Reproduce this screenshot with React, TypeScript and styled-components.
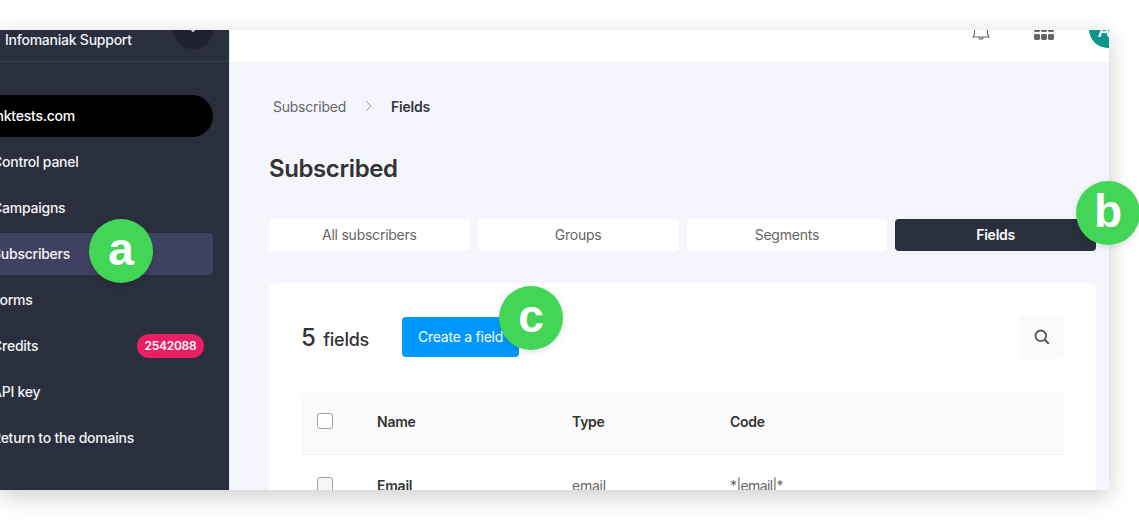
import React from 'react';
import styled, { createGlobalStyle } from 'styled-components';

const GlobalStyle = createGlobalStyle`
  html, body {
    margin: 0;
    padding: 0;
    background: #ffffff;
    font-family: Inter, "Liberation Sans", sans-serif;
    -webkit-font-smoothing: antialiased;
  }
`;

const menuItems = [
  { label: 'Control panel' },
  { label: 'Campaigns' },
  { label: 'Subscribers', active: true },
  { label: 'Forms' },
  { label: 'Credits', badge: '2542088' },
  { label: 'API key' },
  { label: 'Return to the domains' },
];

const tabs = ['All subscribers', 'Groups', 'Segments', 'Fields'];

const App = () => (
  <Page>
    <GlobalStyle />
    <Frame>
      <Sidebar>
        <SideHead>
          <OrgName>Infomaniak Support</OrgName>
          <OrgToggle>
            <svg width="12" height="12" viewBox="0 0 12 12" fill="none" stroke="#e6e7ec" strokeWidth="1.2">
              <path d="M2.5 4 6 7.5 9.5 4" />
            </svg>
          </OrgToggle>
        </SideHead>
        <SideList>
          <DomainPill>linktests.com</DomainPill>
          {menuItems.map((item) => (
            <MenuItem key={item.label} $active={item.active}>
              <span>{item.label}</span>
              {item.badge && <CountBadge>{item.badge}</CountBadge>}
            </MenuItem>
          ))}
        </SideList>
      </Sidebar>
      <Main>
        <TopBar>
          <TopIcon $left={742} $top={-12}>
            <svg width="18" height="24" viewBox="0 0 18 24" fill="none" stroke="#666" strokeWidth="1.1">
              <path d="M2.5 2v14L1 19h16l-1.5-3V2M7 19c0 2.8 4 2.8 4 0" />
            </svg>
          </TopIcon>
          <TopIcon $left={44} $top={-4}>
            <svg width="20" height="14" viewBox="0 0 20 14" fill="#666">
              <rect x="0" y="0" width="6" height="6" rx="1.4" />
              <rect x="7" y="0" width="6" height="6" rx="1.4" />
              <rect x="14" y="0" width="6" height="6" rx="1.4" />
              <rect x="0" y="8" width="6" height="6" rx="1.4" />
              <rect x="7" y="8" width="6" height="6" rx="1.4" />
              <rect x="14" y="8" width="6" height="6" rx="1.4" />
            </svg>
          </TopIcon>
          <Avatar>A</Avatar>
        </TopBar>
        <Content>
          <Breadcrumb>
            <span>Subscribed</span>
            <svg width="8" height="12" viewBox="0 0 8 12" fill="none" stroke="#999" strokeWidth="1">
              <path d="M1.5 1.5 6 6l-4.5 4.5" />
            </svg>
            <strong>Fields</strong>
          </Breadcrumb>
          <Title>Subscribed</Title>
          <Tabs>
            {tabs.map((tab) => (
              <Tab key={tab} $active={tab === 'Fields'}>
                {tab}
              </Tab>
            ))}
          </Tabs>
          <Card>
            <CardHead>
              <Count>
                <b>5</b> fields
              </Count>
              <CreateButton>Create a field</CreateButton>
              <SearchButton>
                <svg width="16" height="16" viewBox="0 0 16 16" fill="none" stroke="#555" strokeWidth="1.8">
                  <circle cx="6.8" cy="6.8" r="5.3" />
                  <path d="m10.8 10.8 4 4" strokeWidth="2.2" />
                </svg>
              </SearchButton>
            </CardHead>
            <TableHead>
              <CheckCell>
                <Check />
              </CheckCell>
              <NameCell>Name</NameCell>
              <TypeCell>Type</TypeCell>
              <CodeCell>Code</CodeCell>
            </TableHead>
            <TableRow>
              <CheckCell>
                <Check $filled />
              </CheckCell>
              <NameCell>Email</NameCell>
              <TypeCell $plain>email</TypeCell>
              <CodeCell $plain>*|email|*</CodeCell>
            </TableRow>
          </Card>
        </Content>
      </Main>
      <Marker $x={121} $y={251}>a</Marker>
      <Marker $x={1108} $y={213}>b</Marker>
      <Marker $x={531} $y={318}>c</Marker>
    </Frame>
  </Page>
);

const Page = styled.div`
  width: 1139px;
  height: 520px;
  padding-top: 30px;
  box-sizing: border-box;
  overflow: hidden;
  background: #ffffff;
`;

const Frame = styled.div`
  position: relative;
  display: flex;
  width: 1109px;
  height: 460px;
  letter-spacing: -0.015em;
  box-shadow: 0 6px 22px rgba(0, 0, 0, 0.2);
`;

const Sidebar = styled.aside`
  width: 230px;
  flex: none;
  overflow: hidden;
  background: #2a2f3e;
  color: #f2f3f6;
  font-size: 14px;
  font-weight: 450;
  border-right: 1px solid #e4e6f0;
  box-sizing: border-box;
`;

const SideHead = styled.div`
  display: flex;
  justify-content: space-between;
  align-items: flex-end;
  height: 66px;
  margin-top: -34px;
  padding: 0 16px 12px 5px;
  box-sizing: border-box;
  border-bottom: 1px solid #3a3f55;
  width: 229px;
`;

const OrgName = styled.div`
  line-height: 18px;
`;

const OrgToggle = styled.div`
  display: flex;
  align-items: flex-start;
  justify-content: center;
  width: 40px;
  height: 40px;
  border-radius: 50%;
  background: #1f222e;
  padding-top: 15px;
  box-sizing: border-box;
`;

const SideList = styled.nav`
  display: flex;
  flex-direction: column;
  gap: 4px;
  width: 253px;
  margin-left: -40px;
  padding-top: 33px;
`;

const DomainPill = styled.div`
  display: flex;
  align-items: center;
  height: 42px;
  padding: 0 0 2px 29px;
  box-sizing: border-box;
  border-radius: 0 21px 21px 0;
  background: #000000;
  color: #ffffff;
`;

const MenuItem = styled.div<{ $active?: boolean }>`
  display: flex;
  align-items: center;
  justify-content: space-between;
  height: 42px;
  padding: 0 9px 2px 32px;
  box-sizing: border-box;
  border-radius: 4px;
  background: ${(props) => (props.$active ? '#3e4160' : 'transparent')};
`;

const CountBadge = styled.span`
  padding: 0 7.5px;
  height: 24px;
  margin-bottom: -2px;
  line-height: 24px;
  border-radius: 12px;
  background: #e91e63;
  color: #ffffff;
  font-size: 12px;
  font-weight: 600;
`;

const Main = styled.main`
  flex: 1;
  min-width: 0;
  display: flex;
  flex-direction: column;
  overflow: hidden;
  background: #f5f6fd;
`;

const TopBar = styled.header`
  display: flex;
  align-items: flex-start;
  height: 32px;
  flex: none;
  background: #ffffff;
`;

const TopIcon = styled.div<{ $left: number; $top: number }>`
  flex: none;
  line-height: 0;
  margin-top: ${(props) => props.$top}px;
  margin-left: ${(props) => props.$left}px;
`;

const Avatar = styled.div`
  flex: none;
  width: 38px;
  height: 38px;
  margin-top: -20px;
  margin-left: 35px;
  padding-right: 8px;
  box-sizing: border-box;
  border-radius: 50%;
  background: #0a9688;
  color: #ffffff;
  font-size: 18px;
  font-weight: 500;
  line-height: 42px;
  text-align: center;
`;

const Content = styled.div`
  flex: 1;
  padding: 35px 13px 0 39px;
`;

const Breadcrumb = styled.div`
  display: flex;
  align-items: center;
  gap: 18.5px;
  height: 18px;
  margin-left: 4px;
  color: #666666;
  font-size: 14px;

  strong {
    color: #333333;
    font-weight: 600;
  }
`;

const Title = styled.h1`
  margin: 39px 0 0;
  color: #333333;
  font-size: 24px;
  line-height: 30px;
  font-weight: 600;
  letter-spacing: -0.4px;
`;

const Tabs = styled.div`
  display: grid;
  grid-template-columns: repeat(4, 1fr);
  gap: 8px;
  margin-top: 35px;
`;

const Tab = styled.div<{ $active?: boolean }>`
  height: 32px;
  line-height: 31px;
  text-align: center;
  border-radius: 4px;
  font-size: 14px;
  font-weight: ${(props) => (props.$active ? 600 : 400)};
  background: ${(props) => (props.$active ? '#2a2f3e' : '#ffffff')};
  color: ${(props) => (props.$active ? '#ffffff' : '#666666')};
`;

const Card = styled.section`
  margin-top: 32px;
  padding: 32px;
  height: 400px;
  border-radius: 8px 8px 0 0;
  background: #ffffff;
`;

const CardHead = styled.div`
  display: flex;
  align-items: center;
  height: 44px;
`;

const Count = styled.div`
  width: 101px;
  color: #333333;
  font-size: 18px;
  font-weight: 500;

  b {
    margin-right: 3px;
    font-size: 24px;
    font-weight: 500;
  }
`;

const CreateButton = styled.button`
  width: 117px;
  height: 40px;
  border: none;
  border-radius: 4px;
  background: #0098ff;
  color: #ffffff;
  font-family: inherit;
  font-size: 14px;
  letter-spacing: inherit;
  text-align: left;
  padding: 0 0 2px 16px;
`;

const SearchButton = styled.div`
  display: flex;
  align-items: center;
  justify-content: center;
  width: 44px;
  height: 44px;
  margin-left: auto;
  border-radius: 4px;
  background: #fafafa;
`;

const CheckCell = styled.div`
  width: 76px;
  padding-left: 16px;
  box-sizing: border-box;
  line-height: 0;
`;

const TableHead = styled.div`
  display: flex;
  align-items: center;
  height: 64px;
  padding-bottom: 2px;
  box-sizing: border-box;
  margin-top: 32px;
  border-radius: 8px 8px 0 0;
  border-bottom: 1px solid #f2f2f2;
  background: #fafafa;
  color: #333333;
  font-size: 14px;
  font-weight: 600;

  ${CheckCell} {
    margin-bottom: 2px;
  }
`;

const TableRow = styled.div`
  display: flex;
  align-items: center;
  height: 60px;
  color: #333333;
  font-size: 14px;
  font-weight: 600;
`;

const Check = styled.span<{ $filled?: boolean }>`
  display: inline-block;
  width: 16px;
  height: 16px;
  box-sizing: border-box;
  border: 1px solid #a3a3a3;
  border-radius: 3px;
  background: ${(props) => (props.$filled ? '#f5f5f5' : '#ffffff')};
`;

const NameCell = styled.div`
  width: 195px;
`;

const TypeCell = styled.div<{ $plain?: boolean }>`
  width: 158px;
  font-weight: ${(props) => (props.$plain ? 400 : 600)};
  color: ${(props) => (props.$plain ? '#666666' : '#333333')};
`;

const CodeCell = styled.div<{ $plain?: boolean }>`
  font-weight: ${(props) => (props.$plain ? 400 : 600)};
  color: ${(props) => (props.$plain ? '#666666' : '#333333')};
  letter-spacing: ${(props) => (props.$plain ? '-0.6px' : 'inherit')};
`;

const Marker = styled.div<{ $x: number; $y: number }>`
  position: absolute;
  left: ${(props) => props.$x - 32}px;
  top: ${(props) => props.$y - 62}px;
  width: 64px;
  height: 64px;
  border-radius: 50%;
  background: #43d656;
  color: #ffffff;
  font-family: "Liberation Sans", Arial, sans-serif;
  font-size: 46px;
  font-weight: 700;
  letter-spacing: 0;
  line-height: 60px;
  text-align: center;
  box-shadow: 0 2px 6px rgba(0, 0, 0, 0.12);
`;

export default App;
